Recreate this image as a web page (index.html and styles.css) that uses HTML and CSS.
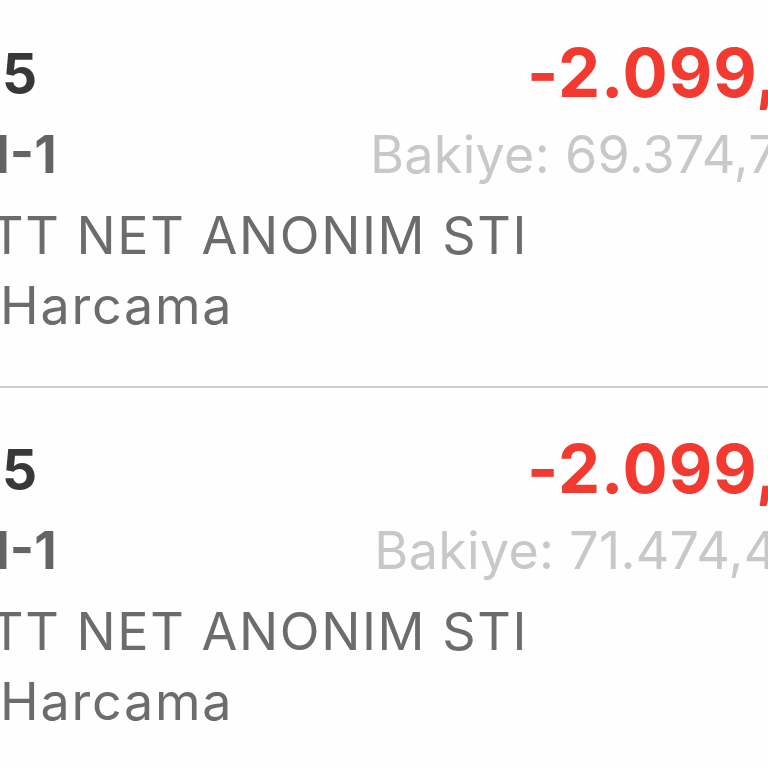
FILE: index.html
```html
<!DOCTYPE html>
<html lang="tr">
<head>
<meta charset="utf-8">
<title>Hesap Hareketleri</title>
<link rel="stylesheet" href="styles.css">
</head>
<body>
<div class="list">
  <div class="tx">
    <div class="row r1">
      <span class="date">5</span>
      <span class="amount">-2.099,70 TL</span>
    </div>
    <div class="row r2">
      <span class="ref">H-1</span>
      <span class="balance">Bakiye: 69.374,75 TL</span>
    </div>
    <div class="row r3">
      <span class="desc">TT NET ANONIM STI</span>
    </div>
    <div class="row r4">
      <span class="type">Harcama</span>
    </div>
  </div>
  <div class="tx">
    <div class="row r1">
      <span class="date">5</span>
      <span class="amount">-2.099,70 TL</span>
    </div>
    <div class="row r2">
      <span class="ref">H-1</span>
      <span class="balance">Bakiye: 71.474,45 TL</span>
    </div>
    <div class="row r3">
      <span class="desc">TT NET ANONIM STI</span>
    </div>
    <div class="row r4">
      <span class="type">Harcama</span>
    </div>
  </div>
</div>
</body>
</html>
```
FILE: styles.css
```css
html, body {
  margin: 0;
  padding: 0;
  background: #fefefe;
  overflow: hidden;
}
body {
  width: 768px;
  height: 768px;
  font-family: Inter, "Noto Sans", sans-serif;
}
.list {
  width: 888px;
  margin-top: -8px;
}
.tx {
  padding: 48px 0 50px;
  border-bottom: 2px solid #cdcdcf;
}
.row {
  display: flex;
  justify-content: space-between;
  align-items: center;
  white-space: nowrap;
}
.r1 { line-height: 66px; }
.r2 { line-height: 60px; margin-top: 19px; }
.r3 { line-height: 60px; margin-top: 21px; }
.r4 { line-height: 60px; margin-top: 10px; }
.date {
  font-size: 55px;
  font-weight: 700;
  color: #38383a;
  margin-left: 2px;
}
.amount {
  font-size: 67px;
  font-weight: 700;
  letter-spacing: 1px;
  color: #f23a30;
  margin-right: -76px;
}
.ref {
  font-size: 52px;
  font-weight: 700;
  color: #646467;
  margin-left: -29px;
}
.balance {
  font-size: 52px;
  font-weight: 400;
  letter-spacing: 0.3px;
  color: #c8c8cb;
}
.desc {
  font-size: 52px;
  font-weight: 400;
  letter-spacing: 1.6px;
  color: #6a6c6e;
  margin-left: -10px;
}
.type {
  font-size: 52px;
  font-weight: 400;
  letter-spacing: 1.8px;
  color: #6a6c6e;
}
```
